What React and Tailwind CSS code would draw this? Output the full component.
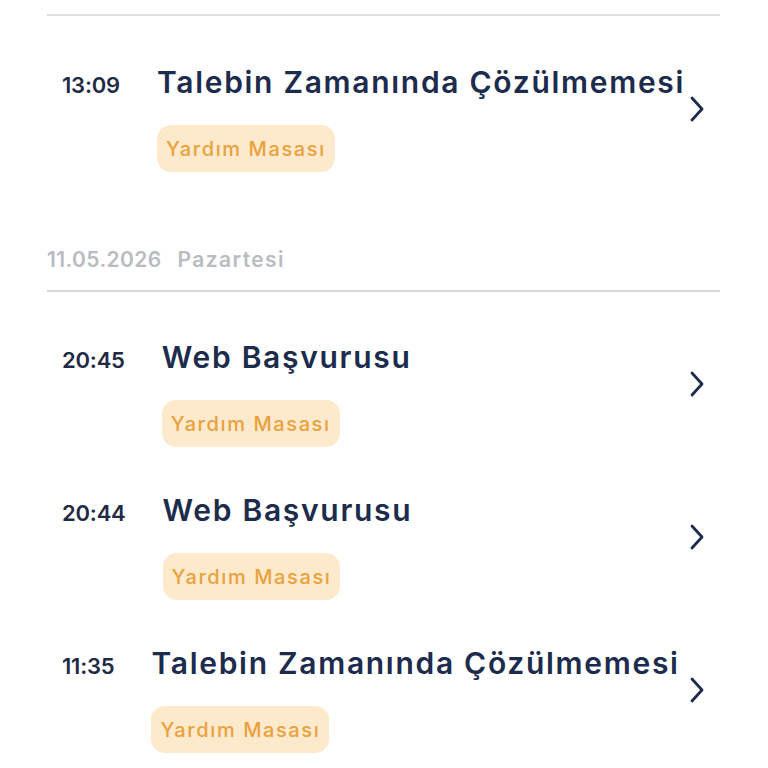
import { Fragment } from 'react';

const groups = [
  {
    date: null,
    items: [{ time: '13:09', title: 'Talebin Zamanında Çözülmemesi', tag: 'Yardım Masası' }],
  },
  {
    date: { day: '11.05.2026', name: 'Pazartesi' },
    items: [
      { time: '20:45', title: 'Web Başvurusu', tag: 'Yardım Masası' },
      { time: '20:44', title: 'Web Başvurusu', tag: 'Yardım Masası' },
      { time: '11:35', title: 'Talebin Zamanında Çözülmemesi', tag: 'Yardım Masası' },
    ],
  },
];

const Chevron = () => (
  <svg width="16" height="26" viewBox="0 0 16 26" fill="none" className="mt-[32px] shrink-0">
    <polyline
      points="3,2 13,13 3,24"
      stroke="#1d2b4d"
      strokeWidth="2.8"
      strokeLinecap="round"
      strokeLinejoin="round"
    />
  </svg>
);

const Row = ({ item }) => (
  <div className="flex items-start justify-between pl-[15px] pr-[15px]">
    <div className="grid grid-cols-[auto_1fr] gap-x-[37px] items-baseline">
      <span className="text-[22px] leading-[32px] font-semibold text-[#1f2a44] tracking-[-0.2px]">
        {item.time}
      </span>
      <span className="text-[30px] leading-[36px] font-semibold text-[#1d2b4d] tracking-[1.7px] whitespace-nowrap">
        {item.title}
      </span>
      <span />
      <div className="mt-[24px] justify-self-start h-[47px] px-[9px] flex items-center rounded-[14px] bg-[#fde9cc]">
        <span className="text-[20px] leading-none font-medium text-[#e9a23d] tracking-[1.6px]">
          {item.tag}
        </span>
      </div>
    </div>
    <Chevron />
  </div>
);

export default function App() {
  return (
    <div
      className="w-full h-[768px] overflow-hidden bg-white pl-[47px] pr-[48px] pt-[14px]"
      style={{ fontFamily: 'Inter, "Noto Sans", sans-serif' }}
    >
      {groups.map((g, gi) => (
        <Fragment key={gi}>
          {g.date && (
            <div className="mt-[75px] flex gap-[16px] text-[21px] leading-[26px] font-semibold text-[#b9bcc1]">
              <span className="tracking-[0.4px]">{g.date.day}</span>
              <span className="tracking-[1.4px]">{g.date.name}</span>
            </div>
          )}
          <div className={g.date ? 'mt-[17px] h-[2px] bg-[#d9d9d9]' : 'h-[2px] bg-[#dedede]'} />
          <div className={g.date ? 'pt-[47px] flex flex-col gap-[45px]' : 'pt-[48px] flex flex-col gap-[45px]'}>
            {g.items.map((item, i) => (
              <Row key={i} item={item} />
            ))}
          </div>
        </Fragment>
      ))}
    </div>
  );
}
